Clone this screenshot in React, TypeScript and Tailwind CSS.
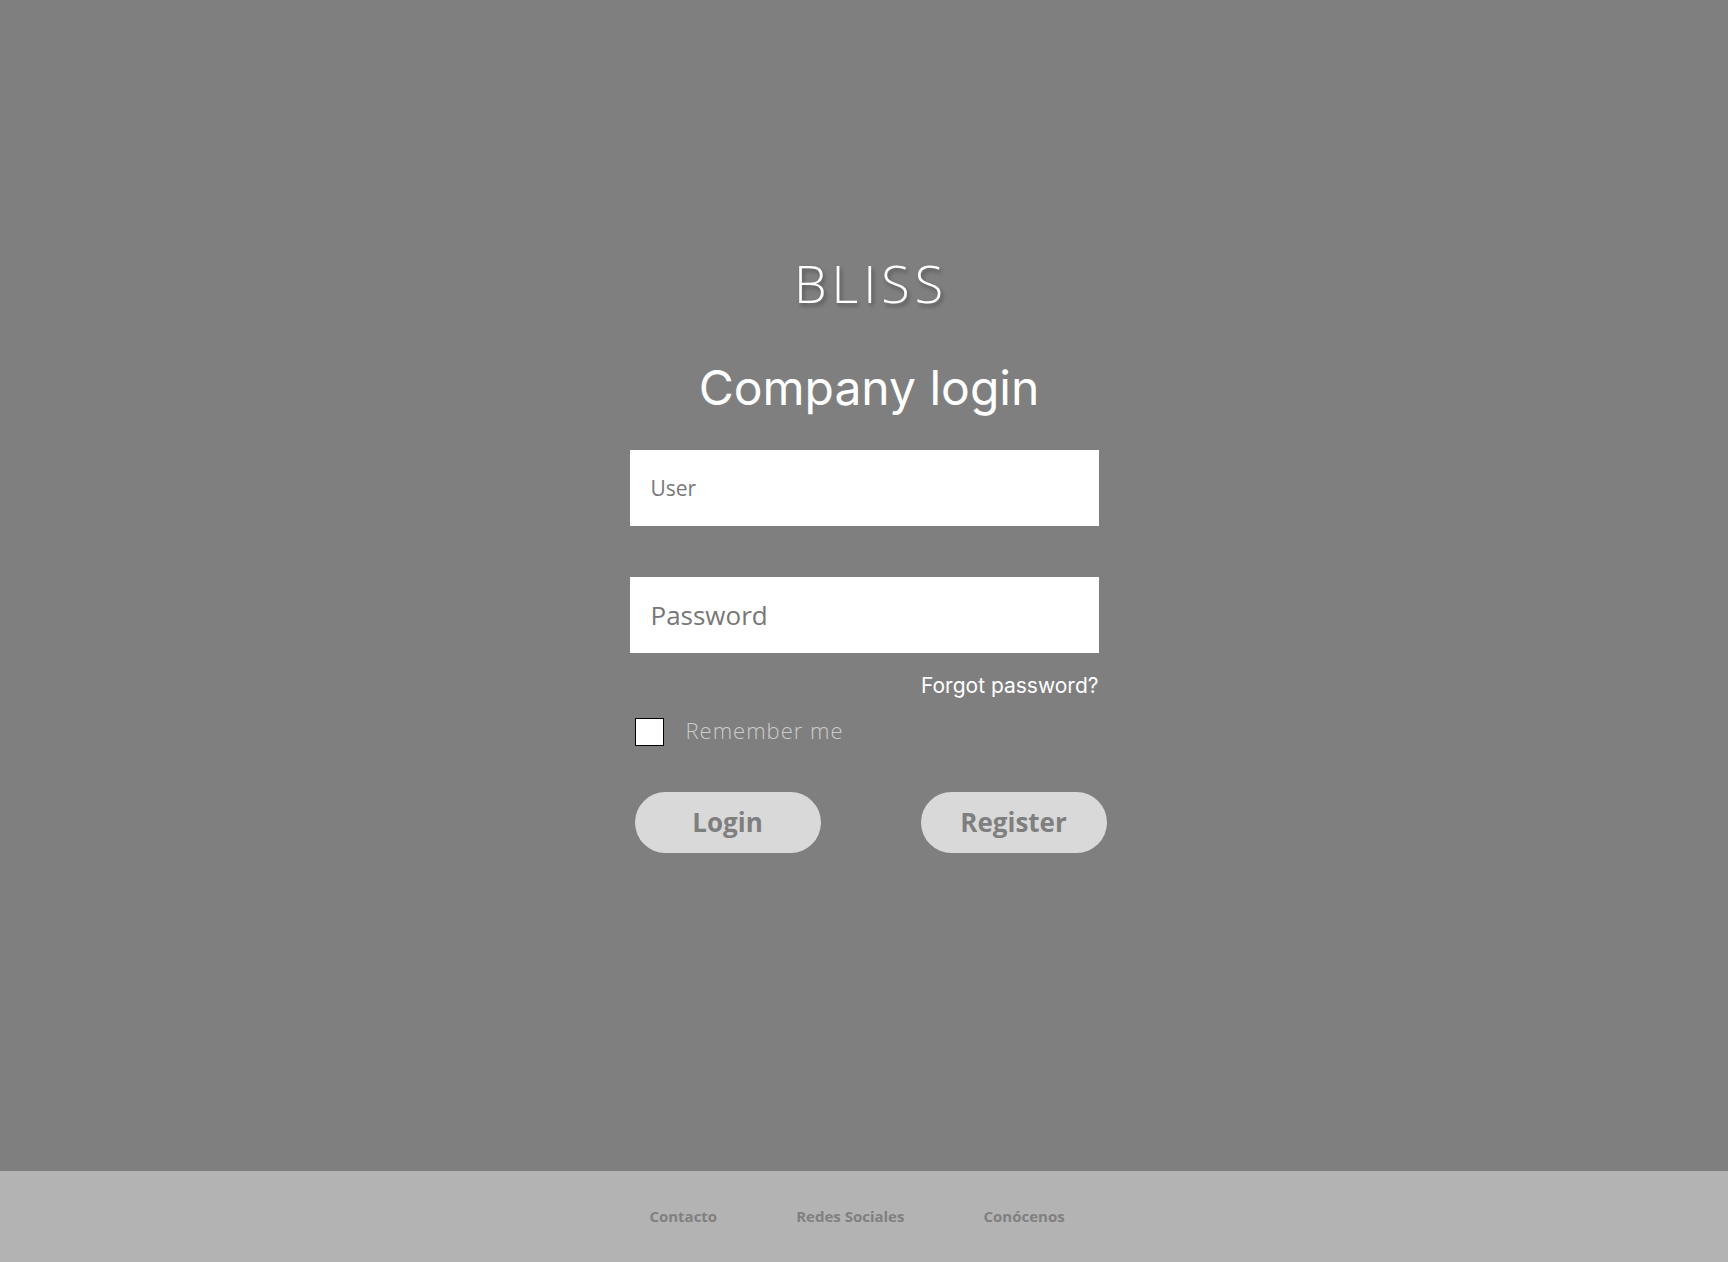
import React from "react";

export default function App() {
  return (
    <div className="w-full h-[1262px] flex flex-col bg-[#7f7f7f]">
      <main className="h-[1171px] flex flex-col items-center">
        <h1
          className="mt-[257px] h-[52px] leading-none text-[52px] font-light tracking-[5px] pl-[14px] text-white font-['Open_Sans',sans-serif] [text-shadow:2px_3px_4px_rgba(0,0,0,0.35)]"
        >
          BLISS
        </h1>
        <h2 className="mt-[55px] h-[48px] leading-none text-[48px] pl-[10px] text-white font-['Inter',sans-serif] font-normal">
          Company login
        </h2>
        <form className="mt-[38px] w-[469px] flex flex-col" onSubmit={(e) => e.preventDefault()}>
          <input
            type="text"
            placeholder="User"
            className="h-[76px] w-full bg-white pl-[21px] outline-none text-[21px] font-medium text-[#6f6f6f] placeholder:text-[#777777] font-['Open_Sans',sans-serif]"
          />
          <input
            type="password"
            placeholder="Password"
            className="mt-[51px] h-[76px] w-full bg-white pl-[21px] outline-none text-[26px] font-medium text-[#6f6f6f] placeholder:text-[#777777] font-['Open_Sans',sans-serif]"
          />
          <div className="mt-[22px] flex justify-end">
            <a href="#" className="h-[22px] leading-none text-[21px] text-white font-['Inter',sans-serif]">
              Forgot password?
            </a>
          </div>
          <label className="mt-[21px] ml-[5px] flex items-center h-[28px]">
            <span className="w-[29px] h-[28px] shrink-0 bg-white border border-black box-border" />
            <span className="ml-[22px] -mt-[3px] text-[22px] font-light text-[#cccccc] font-['Open_Sans',sans-serif] tracking-[1px]">
              Remember me
            </span>
          </label>
          <div className="mt-[46px] ml-[5px] flex gap-[100px]">
            <button
              type="submit"
              className="w-[186px] h-[61px] shrink-0 rounded-full bg-[#d9d9d9] text-[#7f7f7f] text-[26px] font-bold font-['Open_Sans',sans-serif]"
            >
              Login
            </button>
            <button
              type="button"
              className="w-[186px] h-[61px] shrink-0 rounded-full bg-[#d9d9d9] text-[#7f7f7f] text-[26px] font-bold font-['Open_Sans',sans-serif]"
            >
              Register
            </button>
          </div>
        </form>
      </main>
      <footer className="flex-1 bg-[#b3b3b3] flex items-center justify-center gap-[79px] pr-[14px]">
        <a href="#" className="text-[15px] font-bold text-[#808080] font-['Open_Sans',sans-serif]">Contacto</a>
        <a href="#" className="text-[15px] font-bold text-[#808080] font-['Open_Sans',sans-serif]">Redes Sociales</a>
        <a href="#" className="text-[15px] font-bold text-[#808080] font-['Open_Sans',sans-serif]">Conócenos</a>
      </footer>
    </div>
  );
}
